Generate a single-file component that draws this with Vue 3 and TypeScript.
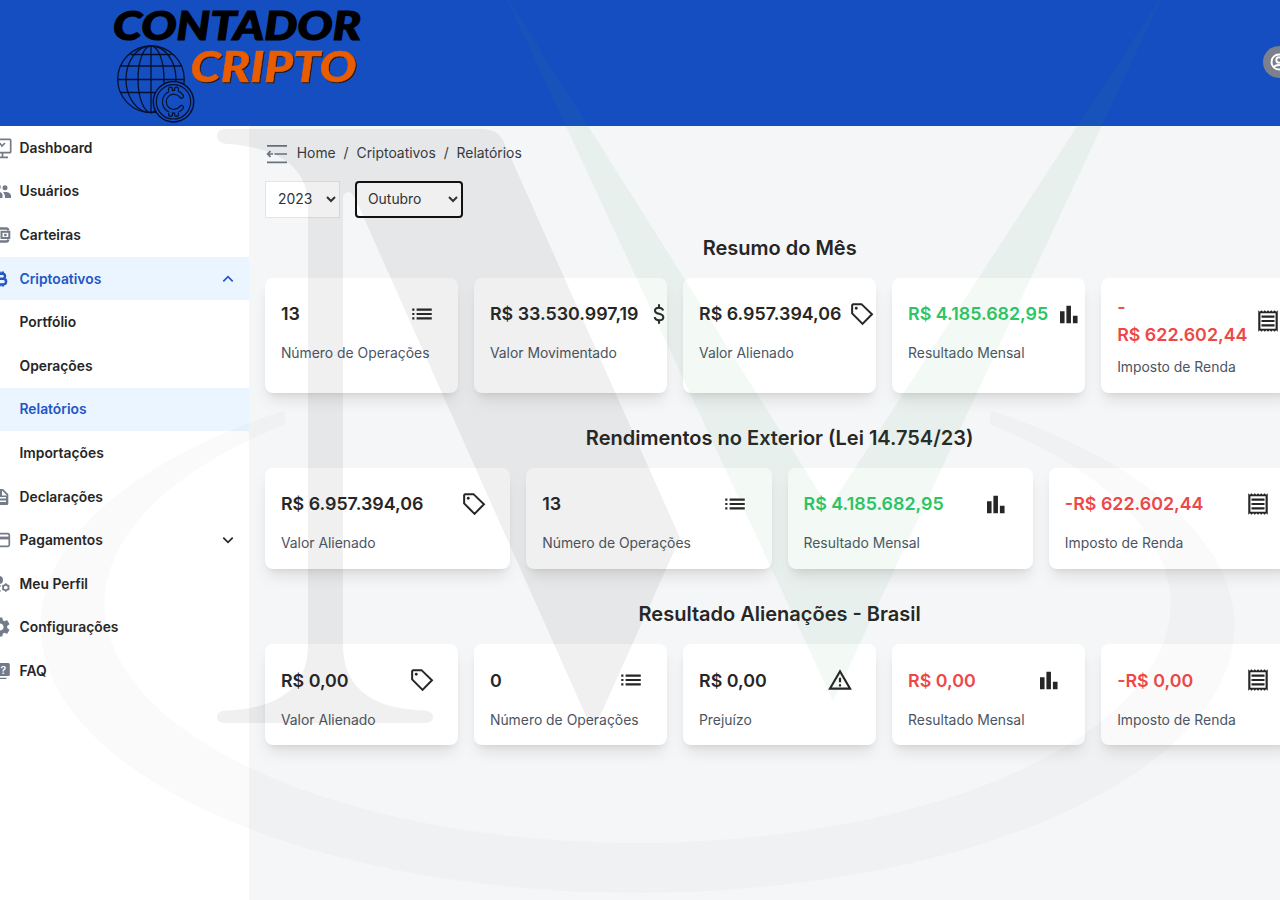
<script setup lang="ts">
import { ref } from 'vue'

type IconName = 'list' | 'dollar' | 'tag' | 'bars' | 'receipt' | 'warning'
interface Metric { value: string; label: string; icon: IconName; tone?: 'gain' | 'loss' }
interface Section { title: string; columns: 'four' | 'five'; metrics: Metric[] }
interface MenuItem { label: string; icon?: string; active?: boolean; chevron?: 'up' | 'down' }

const year = ref('2023')
const month = ref('Outubro')

const menu: MenuItem[] = [
  { label: 'Dashboard', icon: 'monitor' },
  { label: 'Usuários', icon: 'users' },
  { label: 'Carteiras', icon: 'wallet' },
  { label: 'Criptoativos', icon: 'bitcoin', active: true, chevron: 'up' },
  { label: 'Portfólio' },
  { label: 'Operações' },
  { label: 'Relatórios', active: true },
  { label: 'Importações' },
  { label: 'Declarações', icon: 'doc' },
  { label: 'Pagamentos', icon: 'card', chevron: 'down' },
  { label: 'Meu Perfil', icon: 'profile' },
  { label: 'Configurações', icon: 'gear' },
  { label: 'FAQ', icon: 'faq' },
]

const sections: Section[] = [
  {
    title: 'Resumo do Mês',
    columns: 'five',
    metrics: [
      { value: '13', label: 'Número de Operações', icon: 'list' },
      { value: 'R$\u00a033.530.997,19', label: 'Valor Movimentado', icon: 'dollar' },
      { value: 'R$\u00a06.957.394,06', label: 'Valor Alienado', icon: 'tag' },
      { value: 'R$\u00a04.185.682,95', label: 'Resultado Mensal', icon: 'bars', tone: 'gain' },
      { value: '-R$\u00a0622.602,44', label: 'Imposto de Renda', icon: 'receipt', tone: 'loss' },
    ],
  },
  {
    title: 'Rendimentos no Exterior (Lei 14.754/23)',
    columns: 'four',
    metrics: [
      { value: 'R$\u00a06.957.394,06', label: 'Valor Alienado', icon: 'tag' },
      { value: '13', label: 'Número de Operações', icon: 'list' },
      { value: 'R$\u00a04.185.682,95', label: 'Resultado Mensal', icon: 'bars', tone: 'gain' },
      { value: '-R$\u00a0622.602,44', label: 'Imposto de Renda', icon: 'receipt', tone: 'loss' },
    ],
  },
  {
    title: 'Resultado Alienações - Brasil',
    columns: 'five',
    metrics: [
      { value: 'R$\u00a00,00', label: 'Valor Alienado', icon: 'tag' },
      { value: '0', label: 'Número de Operações', icon: 'list' },
      { value: 'R$\u00a00,00', label: 'Prejuízo', icon: 'warning' },
      { value: 'R$\u00a00,00', label: 'Resultado Mensal', icon: 'bars', tone: 'loss' },
      { value: '-R$\u00a00,00', label: 'Imposto de Renda', icon: 'receipt', tone: 'loss' },
    ],
  },
]
</script>

<template>
  <div class="page">
    <header class="header">
      <svg class="logo" width="264" height="126" viewBox="104 0 264 126">
        <text class="brand" x="113" y="40.200" font-size="40" textLength="248" lengthAdjust="spacingAndGlyphs" fill="#000" stroke="#000" stroke-width="1.2">CONTADOR</text>
        <text class="brand accent" x="190.500" y="81.800" font-size="42" textLength="166" lengthAdjust="spacingAndGlyphs" fill="#e95d00" stroke="#e95d00" stroke-width="0.5">CRIPTO</text>
        <g fill="none" stroke="#05102e" stroke-width="1.3">
          <circle cx="151" cy="79.3" r="33.3" />
          <ellipse cx="151" cy="79.3" rx="25" ry="33.3" />
          <ellipse cx="151" cy="79.3" rx="13" ry="33.3" />
          <path d="M151 46v67M130.500 54.500h41M121 66h60M118 79.500h66M121 92.500h34" />
        </g>
        <g fill="#154ec1" stroke="#05102e" stroke-width="1.5">
          <circle cx="173.500" cy="101.800" r="20.200" />
          <circle cx="173.500" cy="101.800" r="17.200" stroke-width="1.200" />
        </g>
        <path d="M181.500 96.200A9.500 9.500 0 1 0 181.500 107.400M170.500 93v-4M176.500 93v-4M170.500 114.500v-4M176.500 114.500v-4" fill="none" stroke="#05102e" stroke-width="5" stroke-linecap="round" />
        <path d="M181.500 96.200A9.500 9.500 0 1 0 181.500 107.400M170.500 93v-4M176.500 93v-4M170.500 114.500v-4M176.500 114.500v-4" fill="none" stroke="#154ec1" stroke-width="2.600" stroke-linecap="round" />
      </svg>
      <span class="avatar">
        <svg width="20" height="20" viewBox="0 0 20 20" fill="none" stroke="#fff" stroke-width="1.9">
          <circle cx="10" cy="10" r="7.500" />
          <circle cx="10" cy="8" r="2.700" />
          <path d="M4.500 15c3-2.600 8-2.600 11 0" />
        </svg>
      </span>
    </header>

    <div class="body">
      <nav class="sidebar">
        <a v-for="item in menu" :key="item.label" class="item" :class="{ active: item.active }">
          <span class="item-icon">
            <svg v-if="item.icon" width="24" height="24" viewBox="0 0 24 24" fill="currentColor">
              <g v-if="item.icon === 'monitor'" fill="none" stroke="currentColor" stroke-width="1.7">
                <rect x="1" y="3.300" width="21.700" height="13.400" rx="1" />
                <path d="M10 17v4M14.500 17v4M7 21.300h13M6 9l3-2 3 .500 2 2.500 3-3" />
              </g>
              <g v-else-if="item.icon === 'users'">
                <circle cx="17" cy="8.800" r="2.500" />
                <circle cx="9.500" cy="8" r="3.200" />
                <path d="M2 19v-2c0-3 4-4.500 7.500-4.500 2 0 4.500 1 5 3V19zM15 13.300c3.500-1.300 8 .7 8 3.200V19h-6c0-2.500-.5-4.500-2-5.700z" />
              </g>
              <g v-else-if="item.icon === 'wallet'" fill="none" stroke="currentColor" stroke-width="2.400">
                <path d="M20.300 7.500C20 5.800 19.500 5.500 18.500 5.500H5v13h13.500c1 0 1.500-.3 1.800-2" />
                <rect x="13.500" y="8.800" width="7.800" height="6.200" stroke-width="2" />
                <path d="M16.200 12h2.400" />
              </g>
              <path v-else-if="item.icon === 'bitcoin'" fill="none" stroke="currentColor" stroke-width="2.400" d="M7 6.800h7.500a2.500 2.500 0 0 1 0 5H9h6.300a2.800 2.800 0 0 1 0 5.600H7M10 6v12M11.500 4.500v2.300M14.800 4.500v2.300M11.500 17v2.500M14.800 17v2.500" />
              <path v-else-if="item.icon === 'doc'" fill-rule="evenodd" d="M6 4h9l5.300 5.300V18.500a1.500 1.500 0 0 1-1.500 1.500H5.500V4zM14 5.500v5h5zM8 12v1.500h10V12zM8 15.500V17h10v-1.500z" />
              <g v-else-if="item.icon === 'card'" fill="none" stroke="currentColor" stroke-width="1.700">
                <rect x="2" y="5.600" width="19.300" height="12.700" rx="1.500" />
                <path d="M2 10h19" stroke-width="2.800" />
              </g>
              <g v-else-if="item.icon === 'profile'">
                <circle cx="11" cy="8" r="4" />
                <path d="M3 19v-2c0-3 5-4.500 10-3.500l-1.500 3 1.500 3z" />
                <circle cx="17.800" cy="15.500" r="2.700" fill="none" stroke="currentColor" stroke-width="1.700" />
                <path d="M17.800 11.300v1.500M17.800 18.200v1.500M14.200 13.400l1.200.7M20.200 16.900l1.200.7M14.200 17.600l1.200-.7M20.200 14.100l1.200-.7" stroke="currentColor" stroke-width="1.700" />
              </g>
              <path v-else-if="item.icon === 'gear'" d="M19.140 12.940c.04-.3.060-.61.060-.94 0-.32-.02-.64-.07-.94l2.030-1.580a.49.49 0 0 0 .12-.61l-1.920-3.320a.488.488 0 0 0-.59-.22l-2.390.96c-.5-.38-1.030-.7-1.620-.94L14.400 2.810a.484.484 0 0 0-.48-.41h-3.840c-.24 0-.43.17-.47.41L9.250 5.350c-.59.24-1.130.57-1.620.94l-2.390-.96a.488.488 0 0 0-.59.22L2.740 8.870c-.12.21-.08.47.12.61l2.030 1.580c-.05.3-.09.63-.09.94s.02.64.07.94l-2.030 1.580a.49.49 0 0 0-.12.61l1.920 3.320c.12.22.37.29.59.22l2.390-.96c.5.38 1.030.7 1.620.94l.36 2.540c.05.24.24.41.48.41h3.840c.24 0 .44-.17.47-.41l.36-2.540c.59-.24 1.130-.56 1.620-.94l2.390.96c.22.08.47 0 .59-.22l1.920-3.320c.12-.22.07-.47-.12-.61l-2.010-1.580zM12 15.600c-1.980 0-3.600-1.620-3.600-3.600s1.620-3.600 3.600-3.600 3.600 1.620 3.600 3.600-1.620 3.600-3.600 3.600z" />
              <g v-else-if="item.icon === 'faq'">
                <rect x="6" y="4" width="15.800" height="13" rx="1.500" />
                <path d="M3 7v12.400h15.500" fill="none" stroke="currentColor" stroke-width="1.400" />
                <text x="12.600" y="14.500" font-size="10.500" font-weight="600" fill="#fff">?</text>
              </g>
            </svg>
          </span>
          <span class="item-label">{{ item.label }}</span>
          <svg v-if="item.chevron" class="chevron" width="12" height="12" viewBox="0 0 12 12" fill="none" stroke="currentColor" stroke-width="1.7">
            <path v-if="item.chevron === 'up'" d="M1.300 8.300L6 3.700l4.700 4.600" />
            <path v-else d="M1.300 3.700L6 8.300l4.700-4.600" />
          </svg>
        </a>
      </nav>

      <main class="main">
        <div class="crumbs">
          <svg width="22" height="22" viewBox="0 0 22 22" fill="none" stroke="#6b7280" stroke-width="1.700">
            <path d="M1 2.800h20M1 19.300h20M8.500 11H21M1.500 11H7M4.500 8.200L1.700 11l2.800 2.800" />
          </svg>
          <span>Home</span><i>/</i><span>Criptoativos</span><i>/</i><span>Relatórios</span>
        </div>
        <div class="filters">
          <select v-model="year" class="year"><option>2023</option></select>
          <select v-model="month" class="month"><option>Outubro</option></select>
        </div>

        <section v-for="s in sections" :key="s.title" class="section">
          <h2>{{ s.title }}</h2>
          <div class="grid" :class="s.columns">
            <article v-for="(m, i) in s.metrics" :key="i" class="card">
              <div class="row">
                <strong class="value" :class="m.tone">{{ m.value }}</strong>
                <span class="icon">
                  <svg width="26" height="26" viewBox="0 0 24 24" fill="currentColor">
                    <path v-if="m.icon === 'list'" d="M3 13h2v-2H3v2zm0 4h2v-2H3v2zm0-8h2V7H3v2zm4 4h14v-2H7v2zm0 4h14v-2H7v2zM7 7v2h14V7H7z" />
                    <path v-else-if="m.icon === 'dollar'" fill="none" stroke="currentColor" stroke-width="1.900" d="M15.800 8.800C15.300 7 14 6.200 12 6.200c-2.300 0-3.700 1.100-3.700 2.700 0 3.900 7.700 2 7.700 6.200 0 1.800-1.600 2.800-3.900 2.800-2.200 0-3.700-1-4.100-3M12 3v3.200M12 18v3" />
                    <template v-else-if="m.icon === 'tag'">
                      <path fill="none" stroke="currentColor" stroke-width="1.850" d="M3.800 2.900h7.700l9.700 9.300-8.700 8.900L2.900 11.500V3.800z" />
                      <circle cx="6.700" cy="6.700" r="1.300" />
                    </template>
                    <path v-else-if="m.icon === 'bars'" d="M3.700 9.400h4.200v11.100H3.700zM9.600 4.400h4.200v16.100H9.600zM15.600 13.700h4.300v6.800h-4.300z" />
                    <path v-else-if="m.icon === 'receipt'" d="M19.500 3.500L18 2l-1.500 1.500L15 2l-1.500 1.500L12 2l-1.500 1.500L9 2 7.500 3.500 6 2 4.500 3.500 3 2v20l1.500-1.500L6 22l1.500-1.500L9 22l1.500-1.500L12 22l1.500-1.500L15 22l1.500-1.500L18 22l1.500-1.500L21 22V2l-1.500 1.500zM19 19.090H5V4.910h14v14.180zM6 15h12v2H6zm0-4h12v2H6zm0-4h12v2H6z" />
                    <path v-else d="M12 5.990L19.530 19H4.470L12 5.990M12 2L1 21h22L12 2zm1 14h-2v2h2v-2zm0-6h-2v4h2v-4z" />
                  </svg>
                </span>
              </div>
              <p class="label">{{ m.label }}</p>
            </article>
          </div>
        </section>
      </main>
    </div>

    <svg class="watermark" width="1280" height="900" viewBox="0 0 1280 900">
      <path fill="#77776c" fill-opacity="0.036" d="M283 411A597 267 0 1 0 992 411Q988 416 991 425A533 239 0 1 1 284 425Q288 416 283 411z" />
      <path fill="#303030" fill-opacity="0.076" d="M225 129H482Q497 129 503 140L680 538L600 716Q593 728 586 716L355 198Q349 187 343 196V645C343 690 375 709 424 710.500Q433 711 433 717Q433 723 424 723H226Q217 723 217 717Q217 711 226 710.500C275 709 308 690 308 645V205C308 165 275 147 227 144Q217 143 217 136Q217 129 225 129z" />
      <path fill="#3aa060" fill-opacity="0.062" d="M503 -9L829 508L1165 -9L833 701z" />
    </svg>
  </div>
</template>

<style>
html, body { margin: 0; overflow: hidden; }
</style>

<style scoped>
.page { position: relative; width: 1280px; height: 900px; overflow: hidden; display: flex; flex-direction: column; background: #f4f6f8; font-family: Inter, "Liberation Sans", sans-serif; font-size: 13.900px; color: #262626; }
.header { height: 125.600px; flex: none; display: flex; align-items: center; justify-content: space-between; padding-left: 104px; margin-right: -15px; background: #154ec1; }
.brand { font-family: Lato, "Open Sans", sans-serif; font-weight: 900; font-style: italic; }
.accent { filter: drop-shadow(1.500px 1.500px 0 #1d1a24); }
.avatar { width: 32px; height: 32px; margin-top: -2px; flex: none; border-radius: 50%; background: #7b808c; display: flex; align-items: center; justify-content: center; }
.body { flex: 1; display: flex; }
.sidebar { width: 249px; flex: none; box-sizing: border-box; padding-top: .500px; background: #fff; }
.item { height: 43.600px; display: flex; align-items: center; font-weight: 600; font-size: 13.850px; }
.item.active { background: #eaf5ff; color: #2456c4; }
.item-icon { width: 24px; height: 24px; margin-left: -12px; margin-right: 7.500px; color: #747b88; flex: none; }
.item.active .item-icon { color: #2456c4; }
.item-label { flex: 1; }
.chevron { margin-right: 15.500px; }
.main { width: 1029.300px; padding: 16px; flex: none; }
.crumbs { height: 22px; padding: 0 1px; display: flex; align-items: center; color: #383c42; margin-top: 1.200px; }
.crumbs span, .crumbs i { margin-top: -1px; }
.crumbs svg { margin-right: 8.800px; }
.crumbs i { font-style: normal; width: 20.800px; text-align: center; }
.filters { display: flex; gap: 15px; margin-top: 16.200px; }
select { box-sizing: border-box; height: 37px; margin: 0; padding: 0 0 0 8px; border: 1px solid #e2e4e8; background: #fff; color: #333; font: 400 13.900px Inter, sans-serif; }
.year { width: 75px; }
.month { width: 108px; padding-left: 7px; border: 2px solid #101010; border-radius: 4px; }
.section { margin-top: 31.200px; }
.filters + .section { margin-top: 15.700px; }
h2 { margin: 0 0 16px; text-align: center; font-size: 20px; line-height: 28px; font-weight: 600; }
.grid { display: grid; gap: 16px; }
.five { grid-template-columns: repeat(5, minmax(0, 1fr)); }
.four { grid-template-columns: repeat(4, minmax(0, 1fr)); }
.card { background: #fff; border-radius: 8px; padding: 15.500px 15.500px 15.500px 15.900px; box-shadow: 0 10px 15px -3px rgba(0,0,0,.1), 0 4px 6px -4px rgba(0,0,0,.1); }
.row { display: flex; align-items: center; justify-content: space-between; min-height: 42px; margin-bottom: 8px; }
.value { font-size: 17.850px; line-height: 28px; font-weight: 600; }
.gain { color: #2cc563; }
.loss { color: #ef4747; }
.icon { width: 42px; height: 41px; padding-bottom: 1px; margin-left: -.400px; flex: none; display: flex; align-items: center; justify-content: center; }
.label { margin: 0; line-height: 20px; color: #4b5563; }
.watermark { position: absolute; left: 0; top: 0; pointer-events: none; }
</style>
